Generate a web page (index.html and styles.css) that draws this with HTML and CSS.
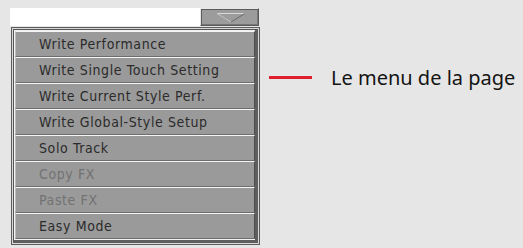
FILE: index.html
```html
<!DOCTYPE html>
<html>
<head>
<meta charset="utf-8">
<link rel="stylesheet" href="styles.css">
</head>
<body>
<div class="page">
  <div class="widget">
    <div class="combo">
      <div class="combo-field"></div>
      <div class="combo-btn">
        <svg class="tri" width="30" height="11" viewBox="0 0 30 11">
          <polyline points="1,1.5 29,1.5" stroke="#d8d8d8" stroke-width="1" fill="none"/>
          <polyline points="1,1.5 15,10" stroke="#c4c4c4" stroke-width="1" fill="none"/>
          <polyline points="29,1.5 15,10" stroke="#6a6a6a" stroke-width="1" fill="none"/>
        </svg>
      </div>
    </div>
    <div class="menu">
      <div class="menu-inner">
        <div class="item">Write Performance</div>
        <div class="item">Write Single Touch Setting</div>
        <div class="item">Write Current Style Perf.</div>
        <div class="item">Write Global-Style Setup</div>
        <div class="item">Solo Track</div>
        <div class="item disabled">Copy FX</div>
        <div class="item disabled">Paste FX</div>
        <div class="item">Easy Mode</div>
      </div>
    </div>
  </div>
  <div class="callout">
    <span class="leader"></span>
    <span class="label">Le menu de la page</span>
  </div>
</div>
</body>
</html>
```

FILE: styles.css
```css
html, body {
  margin: 0;
  padding: 0;
  background: #e6e6e6;
}
.page {
  display: flex;
  align-items: flex-start;
  padding: 8px 0 0 10px;
}
.widget {
  width: 251px;
  display: flex;
  flex-direction: column;
}
.combo {
  display: flex;
  height: 18px;
}
.combo-field {
  width: 190px;
  background: #ffffff;
}
.combo-btn {
  width: 59px;
  box-sizing: border-box;
  background: #9c9c9c;
  border: 1px solid #5a5a5a;
  border-top-color: #e8e8e8;
  border-left-color: #e8e8e8;
  box-shadow: inset 1px 1px 0 #5a5a5a, inset -1px -1px 0 #777;
  display: flex;
  align-items: center;
  justify-content: center;
}
.tri {
  display: block;
  margin-left: 2px;
}
.menu {
  margin-top: 1px;
  margin-left: 1px;
  width: 249px;
  height: 218px;
  box-sizing: border-box;
  border: 1px solid #5c5c5c;
  padding: 1px;
  background: #d9d9d9;
}
.menu-inner {
  height: 100%;
  box-sizing: border-box;
  border: 1px solid #555;
  border-right: 3px solid #5e5e5e;
  border-bottom: 3px solid #5e5e5e;
  background: #f2f2f2;
  padding: 1px 0 0 1px;
  display: flex;
  flex-direction: column;
}
.item {
  height: 26px;
  box-sizing: border-box;
  border-top: 1px solid #f4f4f4;
  border-bottom: 1px solid #6e6e6e;
  border-left: 1px solid #bdbdbd;
  border-right: 1px solid #4e4e4e;
  background: #9a9a9a;
  color: #2b2b2b;
  font-family: "DejaVu Sans Condensed", "DejaVu Sans", sans-serif;
  font-size: 14px;
  letter-spacing: 0.6px;
  padding-left: 23px;
  display: flex;
  align-items: center;
}
.item.disabled {
  color: #727272;
}
.callout {
  display: flex;
  align-items: center;
  margin-top: 56px;
  margin-left: 8px;
}
.leader {
  width: 43px;
  height: 3px;
  background: #e01f2e;
}
.label {
  margin-left: 19px;
  font-family: "Noto Sans", "Open Sans", sans-serif;
  font-size: 20px;
  color: #141414;
  white-space: nowrap;
}
```
